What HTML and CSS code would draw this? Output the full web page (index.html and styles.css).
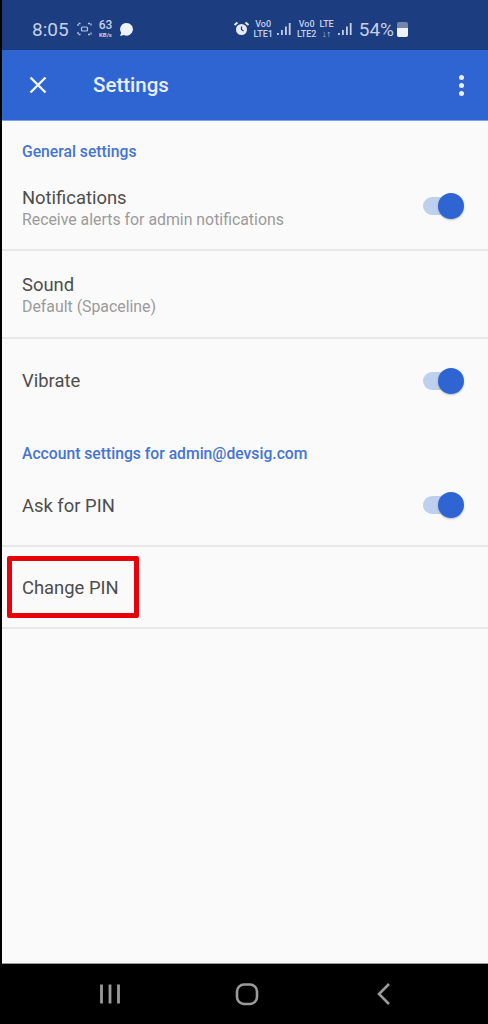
FILE: index.html
```html
<!DOCTYPE html>
<html lang="en">
<head>
  <meta charset="UTF-8">
  <title>Settings</title>
  <link rel="stylesheet" href="styles.css">
</head>
<body>
  <div class="screen">
    <div class="status-bar">
      <div class="status-left">
        <span class="clock">8:05</span>
        <svg class="icon-capture" width="15" height="14" viewBox="0 0 15 14">
          <path d="M1 4V1.500H4M11 1.500H14V4M1 10V12.500H4M11 12.500H14V10" fill="none" stroke="#b9c6e2" stroke-width="1.300" stroke-dasharray="2 1"/>
          <rect x="4.500" y="5" width="6" height="4" rx="1" fill="none" stroke="#b9c6e2" stroke-width="1.200"/>
        </svg>
        <span class="speed"><b>63</b><small>KB/s</small></span>
        <svg width="16" height="15" viewBox="0 0 16 15">
          <path d="M8.500 1a6.300 6.300 0 1 1-2.600 12L2 14l1.200-3.200A6.300 6.300 0 0 1 8.500 1z" fill="#eef2fa"/>
        </svg>
      </div>
      <div class="status-right">
        <svg width="17" height="16" viewBox="0 0 17 16">
          <circle cx="8.500" cy="8.500" r="5.500" fill="#e6ebf6"/>
          <path d="M1.500 4L4.500 1.500M15.500 4L12.500 1.500" stroke="#e6ebf6" stroke-width="2"/>
          <path d="M8.500 5.500V8.500L10.500 10" fill="none" stroke="#1c3d80" stroke-width="1.300"/>
        </svg>
        <span class="net"><b>Vo0</b><b>LTE1</b></span>
        <svg class="bars" width="15" height="14" viewBox="0 0 15 14"><path d="M1 11h1.800v2H1zM5 8h1.800v5H5zM9 4.500h1.800V13H9zM12.800 1h1.800v12h-1.800z" fill="#c5d0e8"/></svg>
        <span class="net"><b>Vo0</b><b>LTE2</b></span>
        <span class="net"><b>LTE</b><b>↓↑</b></span>
        <svg class="bars" width="15" height="14" viewBox="0 0 15 14"><path d="M1 11h1.800v2H1zM5 8h1.800v5H5zM9 4.500h1.800V13H9zM12.800 1h1.800v12h-1.800z" fill="#c5d0e8"/></svg>
        <span class="battery-text">54%</span>
        <span class="battery"><span class="battery-fill"></span></span>
      </div>
    </div>

    <div class="app-bar">
      <svg class="close" width="20" height="20" viewBox="0 0 20 20">
        <path d="M2.500 2.500L17.500 17.500M17.500 2.500L2.500 17.500" stroke="#f2f6ff" stroke-width="2.400"/>
      </svg>
      <span class="app-title">Settings</span>
      <div class="more"><i></i><i></i><i></i></div>
    </div>

    <div class="content">
      <div class="section first">General settings</div>
      <div class="row row-notifications">
        <div>
          <div class="row-title">Notifications</div>
          <div class="row-sub">Receive alerts for admin notifications</div>
        </div>
        <div class="switch"><span class="knob"></span></div>
      </div>
      <div class="row row-sound">
        <div>
          <div class="row-title">Sound</div>
          <div class="row-sub">Default (Spaceline)</div>
        </div>
      </div>
      <div class="row row-vibrate no-line">
        <div class="row-title">Vibrate</div>
        <div class="switch"><span class="knob"></span></div>
      </div>
      <div class="section">Account settings for admin@devsig.com</div>
      <div class="row row-pin">
        <div class="row-title">Ask for PIN</div>
        <div class="switch"><span class="knob"></span></div>
      </div>
      <div class="row row-change">
        <div class="row-title">Change PIN</div>
        <div class="highlight"></div>
      </div>
    </div>

    <div class="nav-bar">
      <svg width="24" height="24" viewBox="0 0 24 24">
        <path d="M3.500 2.500V21.500M12 2.500V21.500M20.500 2.500V21.500" stroke="#9a9a9a" stroke-width="2.800"/>
      </svg>
      <svg class="nav-home" width="24" height="24" viewBox="0 0 24 24">
        <rect x="2" y="2.500" width="20" height="19.500" rx="7" fill="none" stroke="#9a9a9a" stroke-width="2.600"/>
      </svg>
      <svg width="16" height="24" viewBox="0 0 16 24">
        <path d="M13 2L3 12L13 22" fill="none" stroke="#9a9a9a" stroke-width="2.600"/>
      </svg>
    </div>
  </div>
</body>
</html>
```

FILE: styles.css
```css
html, body {
  margin: 0;
  padding: 0;
}
body {
  font-family: 'Roboto', 'Liberation Sans', sans-serif;
  background-color: #000;
}
.screen {
  width: 486px;
  height: 1024px;
  margin-left: 2px;
  display: flex;
  flex-direction: column;
  overflow: hidden;
  background-color: #fafafa;
}
.status-bar {
  height: 50px;
  flex: none;
  padding: 8px 0 0 30px;
  box-sizing: border-box;
  background-color: #1c3d80;
  color: #c5d0e8;
  display: flex;
  align-items: center;
  justify-content: space-between;
}
.status-left, .status-right {
  display: flex;
  align-items: center;
}
.status-right {
  margin-right: 80px;
  gap: 3px;
}
.clock {
  font-size: 19px;
  margin-right: 8px;
}
.speed {
  display: flex;
  flex-direction: column;
  align-items: center;
  margin: 0 6px 0 7px;
}
.speed b {
  font-size: 12px;
  font-weight: 500;
  line-height: 11px;
}
.speed small {
  font-size: 6px;
  font-weight: 700;
  line-height: 7px;
}
.net {
  display: flex;
  flex-direction: column;
  align-items: center;
  font-size: 9px;
  line-height: 10px;
}
.net b {
  font-weight: 500;
}
.bars {
  margin-right: 3px;
}
.battery-text {
  font-size: 19px;
  margin-left: 1px;
}
.battery {
  width: 11px;
  height: 15px;
  border-radius: 2px;
  background-color: #7385ad;
  display: flex;
  align-items: flex-end;
}
.battery-fill {
  display: block;
  width: 100%;
  height: 9px;
  border-radius: 0 0 2px 2px;
  background-color: #eef2fa;
}
.app-bar {
  height: 71px;
  flex: none;
  box-sizing: border-box;
  background-color: #2f65d3;
  border-bottom: 1px solid #7fa0e4;
  display: flex;
  align-items: center;
  padding: 0 24px 0 26px;
  color: #e8eefb;
}
.close {
  margin-right: 45px;
}
.app-title {
  font-size: 20.500px;
  font-weight: 500;
  flex: 1;
}
.more {
  display: flex;
  flex-direction: column;
  gap: 3px;
}
.more i {
  display: block;
  width: 5px;
  height: 5px;
  border-radius: 50%;
  background-color: #eaf0ff;
}
.content {
  flex: 1;
}
.section {
  padding-left: 20px;
  height: 60px;
  display: flex;
  align-items: center;
  font-size: 15.700px;
  font-weight: 500;
  color: #4674d2;
}
.section.first {
  height: 61px;
}
.row {
  display: flex;
  align-items: center;
  justify-content: space-between;
  padding: 0 21px 0 20px;
  box-sizing: border-box;
  border-bottom: 2px solid #e8e8e8;
  position: relative;
}
.no-line {
  border-bottom: none;
}
.row-notifications {
  height: 69px;
  padding-bottom: 15px;
}
.row-notifications .switch {
  margin-bottom: 4px;
}
.row-sound {
  height: 88px;
  padding-top: 3px;
}
.row-vibrate {
  height: 84px;
  padding-bottom: 1px;
}
.row-pin {
  height: 64px;
  padding-bottom: 18px;
}
.row-change {
  height: 82px;
  padding-top: 1px;
}
.row-title {
  font-size: 18.400px;
  color: #4d4d4d;
  line-height: 23px;
}
.row-sub {
  font-size: 15.850px;
  color: #9b9b9b;
  line-height: 22px;
}
.switch {
  width: 38px;
  height: 18px;
  border-radius: 9px;
  background-color: #bfd0ef;
  position: relative;
  margin-right: 6px;
}
.knob {
  position: absolute;
  top: -4px;
  right: -3px;
  width: 26px;
  height: 26px;
  border-radius: 50%;
  background-color: #2f65d3;
  box-shadow: 0 1px 2px rgba(0,0,0,0.25);
}
/* red annotation drawn over the Change PIN row */
.highlight {
  position: absolute;
  left: 5px;
  top: 9px;
  width: 132px;
  height: 62px;
  box-sizing: border-box;
  border: 5px solid #e8000a;
  border-radius: 2px;
}
.nav-bar {
  height: 61px;
  flex: none;
  box-sizing: border-box;
  margin-left: -2px;
  background-color: #000;
  border-top: 1px solid #999;
  display: flex;
  align-items: center;
  padding: 0 96px 0 98px;
  justify-content: space-between;
}
.nav-home {
  margin-right: 4px;
}
```
